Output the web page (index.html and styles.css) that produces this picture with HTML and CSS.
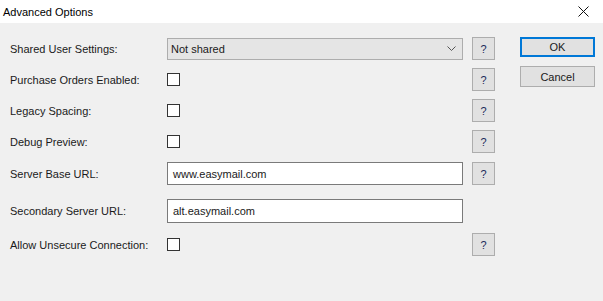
FILE: index.html
```html
<!DOCTYPE html>
<html lang="en">

<head>
    <meta charset="UTF-8">
    <title>Advanced Options</title>
    <link rel="stylesheet" href="styles.css">
</head>

<body>
    <div class="title-bar">
        <label>Advanced Options</label>
        <svg class="close-icon" width="11" height="11" viewBox="0 0 11 11">
            <path d="M0.5 0.5 L10.5 10.5 M10.5 0.5 L0.5 10.5" stroke="#111" stroke-width="1" fill="none" />
        </svg>
    </div>

    <div class="dialog">
        <div class="form">
            <div class="row">
                <div class="row-label">Shared User Settings:</div>
                <div class="select">
                    <span>Not shared</span>
                    <svg width="9" height="5" viewBox="0 0 9 5">
                        <path d="M0.5 0.5 L4.5 4.5 L8.5 0.5" stroke="#555" stroke-width="1" fill="none" />
                    </svg>
                </div>
                <button class="help-button">?</button>
            </div>

            <div class="row">
                <div class="row-label">Purchase Orders Enabled:</div>
                <div class="control"><span class="checkbox"></span></div>
                <button class="help-button">?</button>
            </div>

            <div class="row">
                <div class="row-label">Legacy Spacing:</div>
                <div class="control"><span class="checkbox"></span></div>
                <button class="help-button">?</button>
            </div>

            <div class="row">
                <div class="row-label">Debug Preview:</div>
                <div class="control"><span class="checkbox"></span></div>
                <button class="help-button">?</button>
            </div>

            <div class="row row-server">
                <div class="row-label">Server Base URL:</div>
                <div class="text-input">www.easymail.com</div>
                <button class="help-button">?</button>
            </div>

            <div class="row row-secondary">
                <div class="row-label">Secondary Server URL:</div>
                <div class="text-input">alt.easymail.com</div>
            </div>

            <div class="row row-unsecure">
                <div class="row-label">Allow Unsecure Connection:</div>
                <div class="control"><span class="checkbox"></span></div>
                <button class="help-button">?</button>
            </div>
        </div>

        <div class="actions">
            <button class="dialog-button default-button">OK</button>
            <button class="dialog-button">Cancel</button>
        </div>
    </div>
</body>

</html>
```

FILE: styles.css
```css
body {
    margin: 0;
    width: 603px;
    height: 301px;
    background-color: #f0f0f0;
    font-family: 'Segoe UI', 'Liberation Sans', Arial, sans-serif;
    font-size: 11px;
    color: #1a1a1a;
    overflow: hidden;
}

.title-bar {
    height: 23px;
    background-color: #fff;
    display: flex;
    align-items: center;
    justify-content: space-between;
    padding: 0 14px 0 3px;
}

.title-bar label {
    font-size: 11px;
    color: #000;
}

.dialog {
    display: flex;
    padding: 14px 0 0 10px;
}

.form {
    display: flex;
    flex-direction: column;
    gap: 8px;
}

.row {
    display: flex;
    align-items: center;
    height: 23px;
}

.row-server {
    margin-top: 1px;
}

.row-secondary {
    margin-top: 6px;
    height: 24px;
}

.row-unsecure {
    margin-top: 2px;
}

.row-label {
    width: 157px;
}

.control {
    width: 296px;
    display: flex;
    align-items: center;
}

.checkbox {
    width: 13px;
    height: 13px;
    box-sizing: border-box;
    border: 1px solid #333;
    background-color: #fff;
}

.select {
    width: 296px;
    height: 22px;
    box-sizing: border-box;
    border: 1px solid #adadad;
    background-color: #e5e5e5;
    display: flex;
    align-items: center;
    justify-content: space-between;
    padding: 0 6px 0 3px;
}

.text-input {
    width: 296px;
    height: 100%;
    box-sizing: border-box;
    border: 1px solid #7a7a7a;
    background-color: #fff;
    display: flex;
    align-items: center;
    padding-left: 5px;
}

.help-button {
    width: 23px;
    height: 23px;
    margin-left: 9px;
    box-sizing: border-box;
    border: 1px solid #adadad;
    background-color: #e1e1e1;
    color: #1c2a5a;
    font-family: 'Segoe UI', 'Liberation Sans', Arial, sans-serif;
    font-size: 11px;
    padding: 0;
}

.actions {
    display: flex;
    flex-direction: column;
    gap: 9px;
    margin-left: 25px;
}

.dialog-button {
    width: 75px;
    height: 21px;
    box-sizing: border-box;
    border: 1px solid #adadad;
    background-color: #e1e1e1;
    color: #1a1a1a;
    font-family: 'Segoe UI', 'Liberation Sans', Arial, sans-serif;
    font-size: 11px;
    padding: 0;
}

.default-button {
    height: 20px;
    border: 2px solid #0078d7;
}
```
